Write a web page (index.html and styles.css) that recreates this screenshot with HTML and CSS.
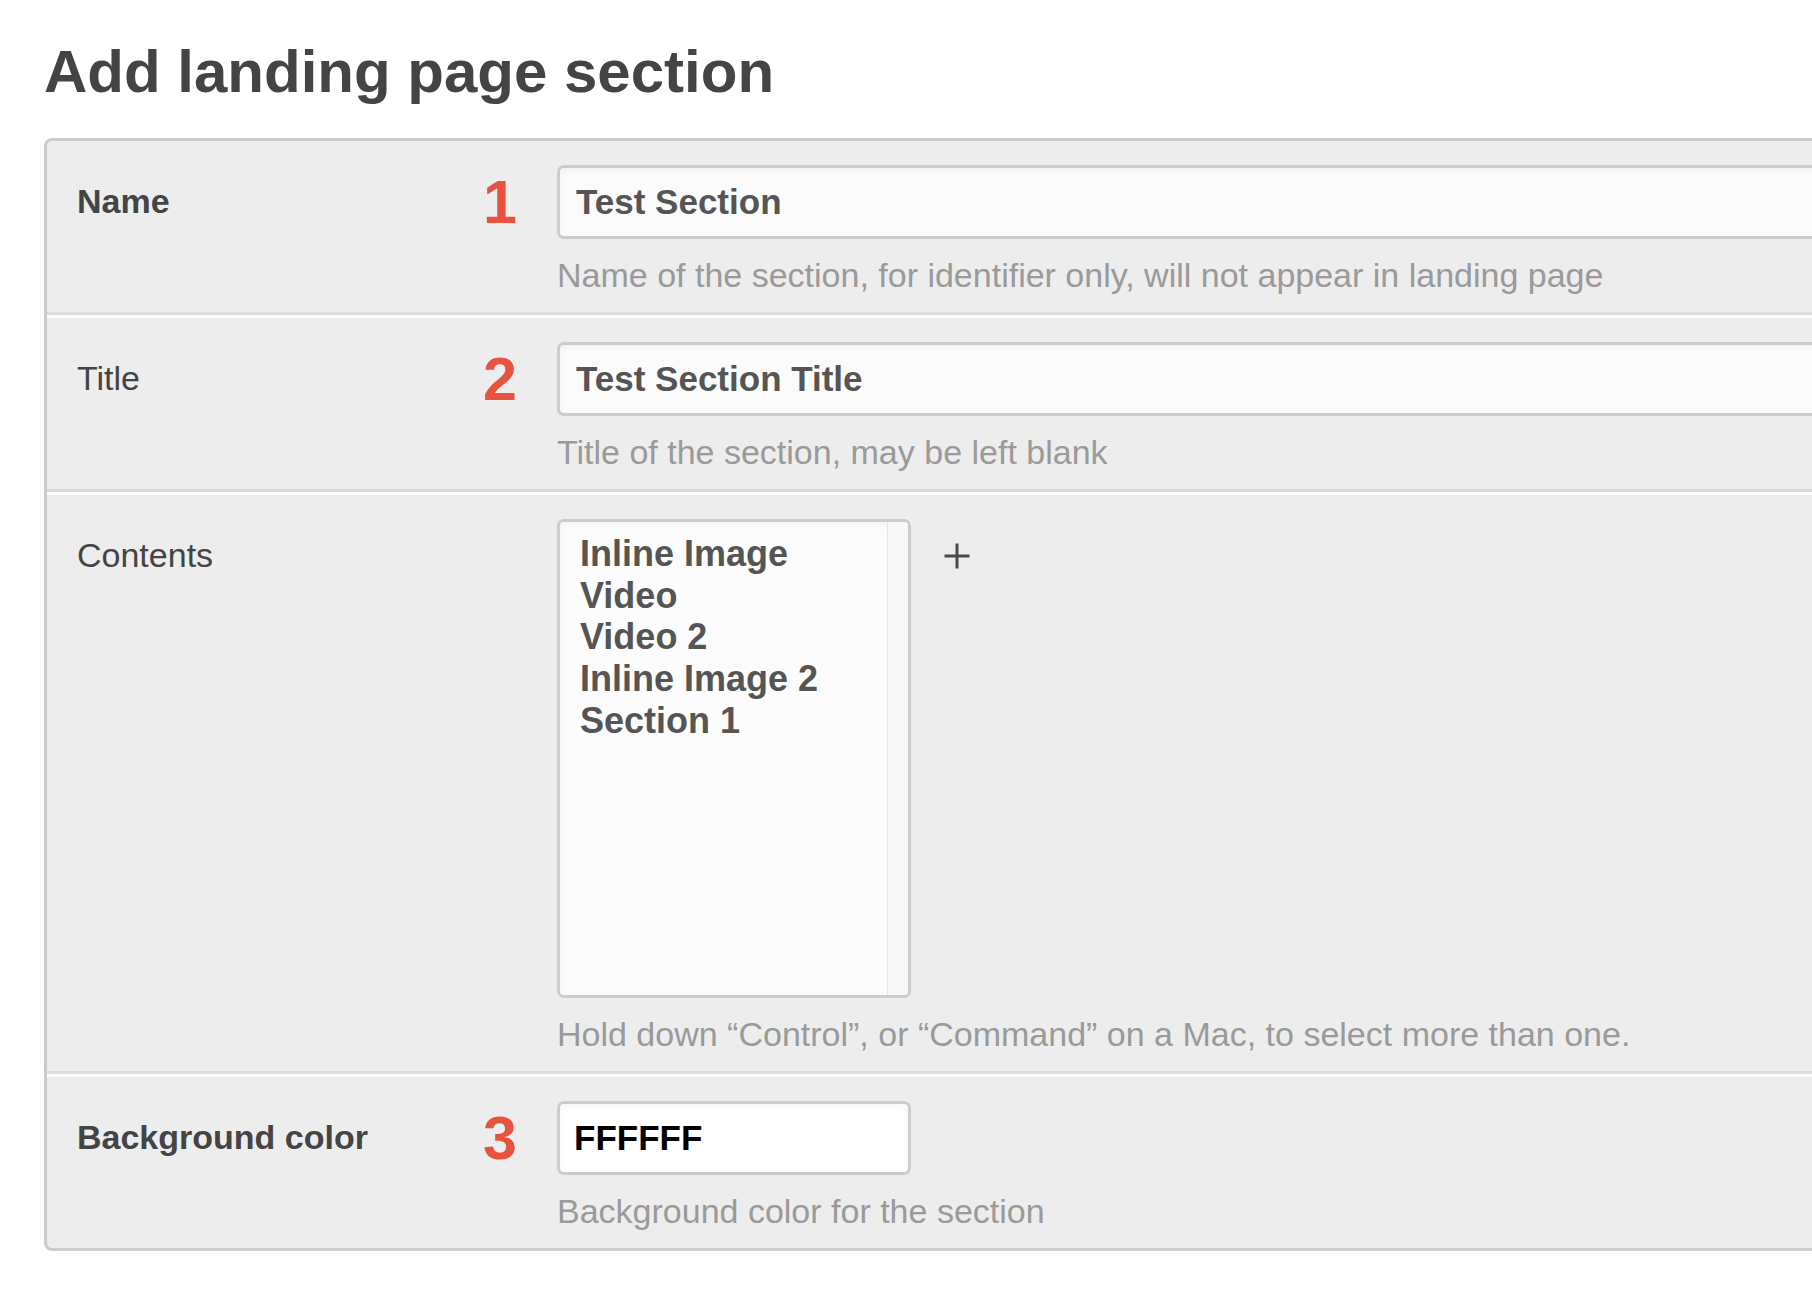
FILE: index.html
```html
<!DOCTYPE html>
<html lang="en">
<head>
<meta charset="utf-8">
<title>Add landing page section</title>
<link rel="stylesheet" href="styles.css">
</head>
<body>
<h1 class="page-title">Add landing page section</h1>
<form class="panel">
  <div class="row">
    <div class="label-col">
      <label class="label required" for="f-name">Name</label>
      <span class="step">1</span>
    </div>
    <div class="field-col">
      <input class="text-input wide" id="f-name" type="text" value="Test Section">
      <p class="help">Name of the section, for identifier only, will not appear in landing page</p>
    </div>
  </div>
  <div class="row">
    <div class="label-col">
      <label class="label" for="f-title">Title</label>
      <span class="step">2</span>
    </div>
    <div class="field-col">
      <input class="text-input wide" id="f-title" type="text" value="Test Section Title">
      <p class="help">Title of the section, may be left blank</p>
    </div>
  </div>
  <div class="row">
    <div class="label-col">
      <span class="label">Contents</span>
    </div>
    <div class="field-col">
      <div class="multi-wrap">
        <div class="multi-select" role="listbox" aria-multiselectable="true">
          <ul class="options">
            <li>Inline Image</li>
            <li>Video</li>
            <li>Video 2</li>
            <li>Inline Image 2</li>
            <li>Section 1</li>
          </ul>
          <div class="track"></div>
        </div>
        <a class="add-link" href="#" aria-label="Add another">
          <svg width="28" height="28" viewBox="0 0 28 28"><path d="M14 1.5v25M1.5 14h25" stroke="#4a4a4a" stroke-width="3" fill="none"/></svg>
        </a>
      </div>
      <p class="help">Hold down “Control”, or “Command” on a Mac, to select more than one.</p>
    </div>
  </div>
  <div class="row">
    <div class="label-col">
      <label class="label required" for="f-bg">Background color</label>
      <span class="step">3</span>
    </div>
    <div class="field-col">
      <input class="text-input color" id="f-bg" type="text" value="FFFFFF">
      <p class="help">Background color for the section</p>
    </div>
  </div>
</form>
</body>
</html>
```
FILE: styles.css
```css
html, body {
  margin: 0;
  padding: 0;
  overflow: hidden;
  background: #ffffff;
}
body {
  font-family: "Liberation Sans", Arial, Helvetica, sans-serif;
  color: #444;
}
.page-title {
  margin: 37px 0 32px 44px;
  font-size: 60px;
  line-height: 69px;
  font-weight: bold;
  color: #444;
}
.panel {
  margin: 0 0 0 44px;
  width: 1900px;
  border: 3px solid #cccccc;
  border-radius: 8px;
  background: #ededed;
}
.row {
  display: flex;
  padding: 24px 0 17px 30px;
  border-bottom: 3px solid #dcdcdc;
}
.row + .row {
  border-top: 3px solid #ffffff;
}
.row:last-child {
  border-bottom: none;
  padding-bottom: 17px;
}
.label-col {
  width: 480px;
  flex: none;
  display: flex;
  justify-content: space-between;
  align-items: flex-start;
}
.label {
  font-size: 34px;
  line-height: 72px;
  color: #444;
}
.label.required {
  font-weight: bold;
}
.step {
  font-size: 61px;
  line-height: 74px;
  font-weight: bold;
  color: #e8533f;
  margin-right: 40px;
}
.field-col {
  flex: 1;
  min-width: 0;
}
.text-input {
  display: block;
  box-sizing: border-box;
  height: 74px;
  margin: 0;
  padding: 0 16px;
  border: 3px solid #cccccc;
  border-radius: 7px;
  background: #fbfbfb;
  box-shadow: inset 0 3px 6px rgba(0, 0, 0, 0.04);
  font-family: "Liberation Sans", Arial, Helvetica, sans-serif;
  font-size: 35px;
  font-weight: bold;
  color: #555;
  outline: none;
}
.text-input.wide {
  width: 100%;
}
.text-input.color {
  width: 354px;
  padding-left: 14px;
  background: #ffffff;
  color: #000;
}
.help {
  margin: 16px 0 0 0;
  font-size: 34px;
  line-height: 40px;
  color: #9a9a9a;
}
.multi-wrap {
  display: flex;
  align-items: flex-start;
}
.multi-select {
  box-sizing: border-box;
  width: 354px;
  height: 479px;
  display: flex;
  border: 3px solid #cccccc;
  border-radius: 7px;
  background: #fcfcfc;
  box-shadow: inset 0 3px 6px rgba(0, 0, 0, 0.04);
  overflow: hidden;
}
.options {
  flex: 1;
  list-style: none;
  margin: 0;
  padding: 11px 0 0 20px;
}
.options li {
  font-size: 36px;
  line-height: 41.7px;
  font-weight: bold;
  color: #555;
  white-space: nowrap;
}
.track {
  width: 20px;
  flex: none;
  border-left: 1px solid #e4e4e4;
  background: #f8f8f8;
}
.add-link {
  display: block;
  width: 28px;
  height: 28px;
  margin: 23px 0 0 32px;
}
.add-link svg {
  display: block;
}
```
